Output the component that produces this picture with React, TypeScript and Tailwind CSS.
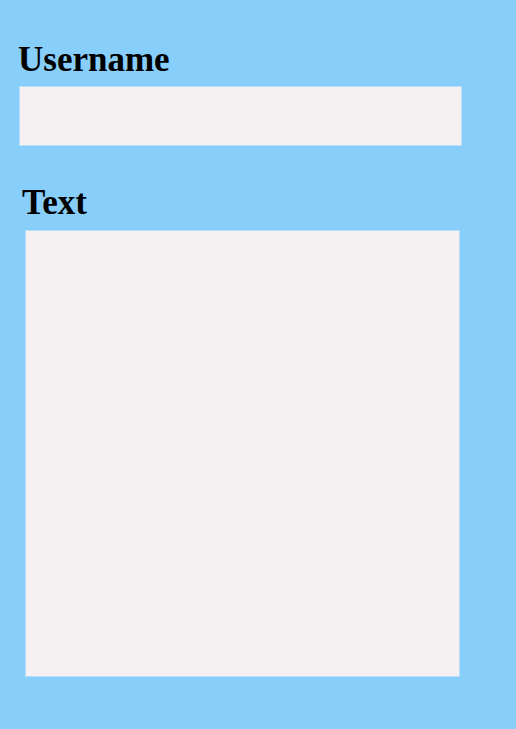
import React, { useState } from 'react';

const App: React.FC = () => {
  const [username, setUsername] = useState('');
  const [text, setText] = useState('');

  return (
    <div className="min-h-screen w-full bg-[#87cefa] pt-[38px]" style={{ fontFamily: '"Liberation Serif", serif' }}>
      <div className="pl-[18px]">
        <label htmlFor="username" className="block text-[35px] font-bold leading-[44px] text-black">
          Username
        </label>
      </div>
      <div className="pl-[19px] pt-[4px]">
        <input
          id="username"
          type="text"
          value={username}
          onChange={(e) => setUsername(e.target.value)}
          className="block h-[60px] w-[443px] border border-[#b9def6] bg-[#f5f1f2] px-2 text-xl outline-none"
        />
      </div>
      <div className="pl-[22px] pt-[35px]">
        <label htmlFor="text" className="block text-[35px] font-bold leading-[44px] text-black">
          Text
        </label>
      </div>
      <div className="pl-[25px] pt-[5px]">
        <textarea
          id="text"
          value={text}
          onChange={(e) => setText(e.target.value)}
          className="block h-[447px] w-[435px] resize-none border border-[#b9def6] bg-[#f5f1f2] p-2 text-xl outline-none"
        />
      </div>
    </div>
  );
};

export default App;
